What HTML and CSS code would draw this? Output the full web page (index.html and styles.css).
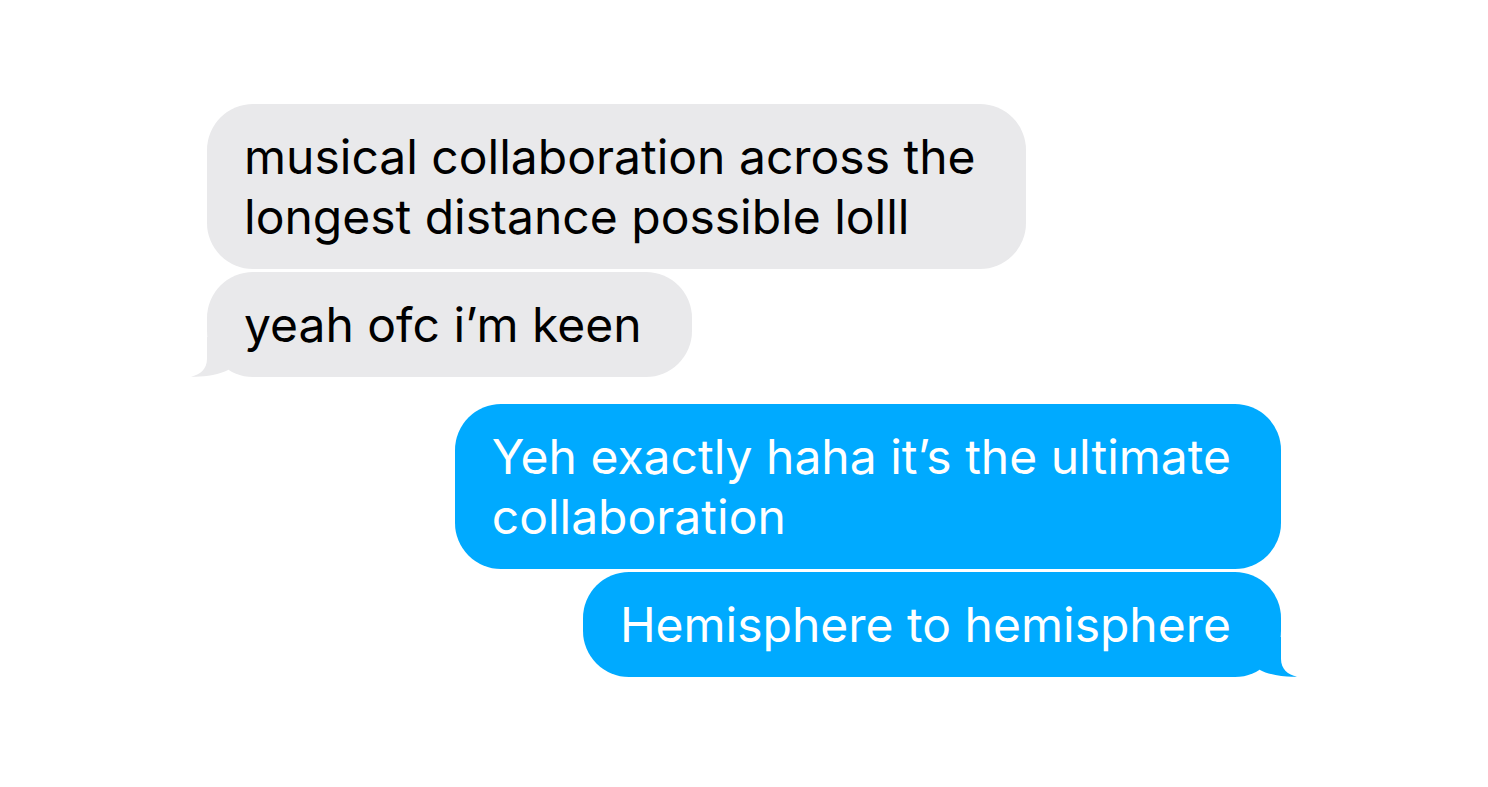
FILE: index.html
```html
<!DOCTYPE html>
<html lang="en">
<head>
  <meta charset="UTF-8">
  <title>Messages</title>
  <link rel="stylesheet" href="styles.css">
</head>
<body>
  <div class="chat">
    <div class="group">
      <div class="msg them">musical collaboration across the<br>longest distance possible lolll</div>
      <div class="msg them tail">yeah ofc i’m keen
        <svg class="tail-shape" viewBox="0 0 40 45" width="40" height="45"><path d="M17 5 L17 27 C17 37 10 43 1 44.5 C11 45.5 29 43 38 38 L38 5 Z"/></svg>
      </div>
    </div>
    <div class="group">
      <div class="msg me">Yeh exactly haha it’s the ultimate<br>collaboration</div>
      <div class="msg me tail">Hemisphere to hemisphere
        <svg class="tail-shape" viewBox="0 0 40 45" width="40" height="45"><path d="M17 5 L17 27 C17 37 10 43 1 44.5 C11 45.5 29 43 38 38 L38 5 Z"/></svg>
      </div>
    </div>
  </div>
</body>
</html>
```
FILE: styles.css
```css
body {
  margin: 0;
  background: #fff;
  font-family: Inter, "Noto Sans", sans-serif;
}

.chat {
  width: 1074px;
  margin: 104px auto 0;
  display: flex;
  flex-direction: column;
  gap: 27px;
}

.group {
  display: flex;
  flex-direction: column;
  gap: 3px;
}

.msg {
  position: relative;
  padding: 23px 50px 22px 37px;
  border-radius: 46px;
  font-size: 48px;
  line-height: 60px;
  white-space: nowrap;
}

.them {
  align-self: flex-start;
  background: #e9e9eb;
  color: #000;
}

.me {
  align-self: flex-end;
  background: #00aaff;
  color: #fff;
}

.tail-shape {
  position: absolute;
  bottom: 0;
}

.them .tail-shape {
  left: -17px;
  fill: #e9e9eb;
}

.me .tail-shape {
  right: -17px;
  fill: #00aaff;
  transform: scaleX(-1);
}
```
